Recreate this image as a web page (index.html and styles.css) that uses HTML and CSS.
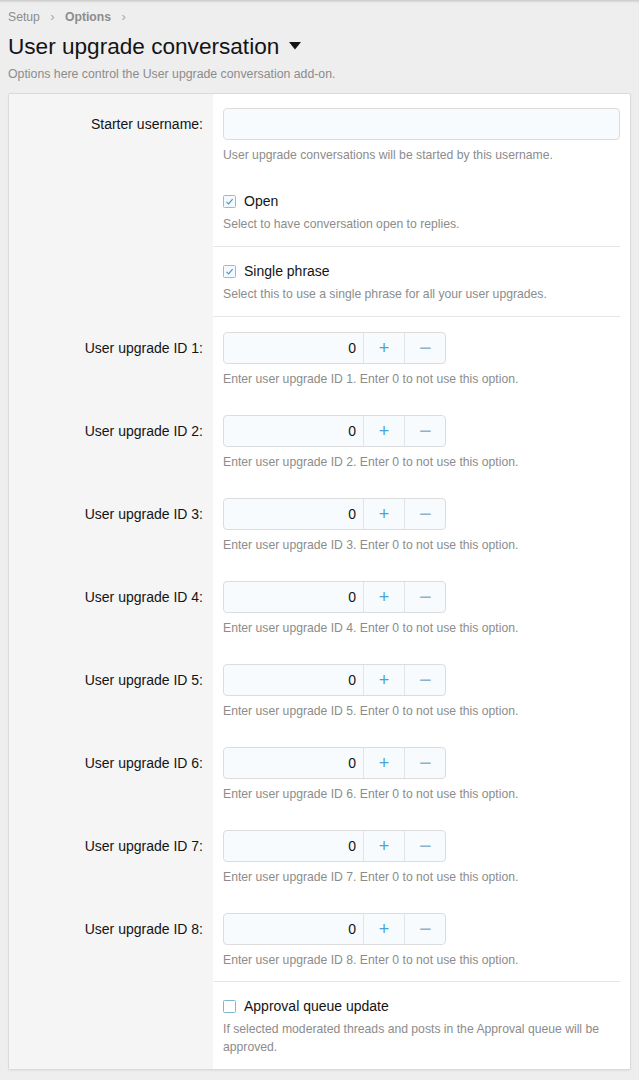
FILE: index.html
```html
<!DOCTYPE html>
<html lang="en">
<head>
    <meta charset="UTF-8">
    <meta name="viewport" content="width=device-width, initial-scale=1.0">
    <title>User upgrade conversation - Options</title>
    <link rel="stylesheet" href="styles.css">
</head>
<body>
    <div class="page">
        <div class="breadcrumb">
            <span>Setup</span>
            <span class="sep">&rsaquo;</span>
            <span class="crumb-bold">Options</span>
            <span class="sep">&rsaquo;</span>
        </div>

        <h1 class="page-title">User upgrade conversation
            <svg class="caret" width="12" height="8" viewBox="0 0 12 8"><path d="M0 0 H12 L6 7.5 Z" fill="#141414"/></svg>
        </h1>
        <p class="page-desc">Options here control the User upgrade conversation add-on.</p>

        <div class="panel">
            <div class="row">
                <div class="label">Starter username:</div>
                <div class="field">
                    <input class="text-input" type="text">
                    <div class="hint">User upgrade conversations will be started by this username.</div>
                </div>
            </div>

            <div class="row">
                <div class="label"></div>
                <div class="field sep-row check-field">
                    <label class="check">
                        <svg class="box" width="13" height="13" viewBox="0 0 13 13"><rect x="0.5" y="0.5" width="12" height="12" rx="1" fill="#f3f9fc" stroke="#8cbfd8"/><path d="M3.5 6.8 L5.6 8.9 L9.6 4.2" fill="none" stroke="#3f97c9" stroke-width="1.1"/></svg>
                        Open
                    </label>
                    <div class="hint">Select to have conversation open to replies.</div>
                </div>
            </div>

            <div class="row">
                <div class="label"></div>
                <div class="field sep-row check-field">
                    <label class="check">
                        <svg class="box" width="13" height="13" viewBox="0 0 13 13"><rect x="0.5" y="0.5" width="12" height="12" rx="1" fill="#f3f9fc" stroke="#8cbfd8"/><path d="M3.5 6.8 L5.6 8.9 L9.6 4.2" fill="none" stroke="#3f97c9" stroke-width="1.1"/></svg>
                        Single phrase
                    </label>
                    <div class="hint">Select this to use a single phrase for all your user upgrades.</div>
                </div>
            </div>

            <div class="row">
                <div class="label">User upgrade ID 1:</div>
                <div class="field num-field">
                    <div class="number-box"><input class="number-input" type="text" value="0"><span class="num-btn plus">+</span><span class="num-btn minus"><span class="glyph">&minus;</span></span></div>
                    <div class="hint">Enter user upgrade ID 1. Enter 0 to not use this option.</div>
                </div>
            </div>

            <div class="row">
                <div class="label">User upgrade ID 2:</div>
                <div class="field num-field">
                    <div class="number-box"><input class="number-input" type="text" value="0"><span class="num-btn plus">+</span><span class="num-btn minus"><span class="glyph">&minus;</span></span></div>
                    <div class="hint">Enter user upgrade ID 2. Enter 0 to not use this option.</div>
                </div>
            </div>

            <div class="row">
                <div class="label">User upgrade ID 3:</div>
                <div class="field num-field">
                    <div class="number-box"><input class="number-input" type="text" value="0"><span class="num-btn plus">+</span><span class="num-btn minus"><span class="glyph">&minus;</span></span></div>
                    <div class="hint">Enter user upgrade ID 3. Enter 0 to not use this option.</div>
                </div>
            </div>

            <div class="row">
                <div class="label">User upgrade ID 4:</div>
                <div class="field num-field">
                    <div class="number-box"><input class="number-input" type="text" value="0"><span class="num-btn plus">+</span><span class="num-btn minus"><span class="glyph">&minus;</span></span></div>
                    <div class="hint">Enter user upgrade ID 4. Enter 0 to not use this option.</div>
                </div>
            </div>

            <div class="row">
                <div class="label">User upgrade ID 5:</div>
                <div class="field num-field">
                    <div class="number-box"><input class="number-input" type="text" value="0"><span class="num-btn plus">+</span><span class="num-btn minus"><span class="glyph">&minus;</span></span></div>
                    <div class="hint">Enter user upgrade ID 5. Enter 0 to not use this option.</div>
                </div>
            </div>

            <div class="row">
                <div class="label">User upgrade ID 6:</div>
                <div class="field num-field">
                    <div class="number-box"><input class="number-input" type="text" value="0"><span class="num-btn plus">+</span><span class="num-btn minus"><span class="glyph">&minus;</span></span></div>
                    <div class="hint">Enter user upgrade ID 6. Enter 0 to not use this option.</div>
                </div>
            </div>

            <div class="row">
                <div class="label">User upgrade ID 7:</div>
                <div class="field num-field">
                    <div class="number-box"><input class="number-input" type="text" value="0"><span class="num-btn plus">+</span><span class="num-btn minus"><span class="glyph">&minus;</span></span></div>
                    <div class="hint">Enter user upgrade ID 7. Enter 0 to not use this option.</div>
                </div>
            </div>

            <div class="row">
                <div class="label">User upgrade ID 8:</div>
                <div class="field num-field sep-row">
                    <div class="number-box"><input class="number-input" type="text" value="0"><span class="num-btn plus">+</span><span class="num-btn minus"><span class="glyph">&minus;</span></span></div>
                    <div class="hint">Enter user upgrade ID 8. Enter 0 to not use this option.</div>
                </div>
            </div>

            <div class="row">
                <div class="label"></div>
                <div class="field check-field">
                    <label class="check">
                        <svg class="box" width="13" height="13" viewBox="0 0 13 13"><rect x="0.5" y="0.5" width="12" height="12" rx="1" fill="#ffffff" stroke="#7fb6d2"/></svg>
                        Approval queue update
                    </label>
                    <div class="hint">If selected moderated threads and posts in the Approval queue will be approved.</div>
                </div>
            </div>
        </div>
    </div>
</body>
</html>
```

FILE: styles.css
```css
body {
    margin: 0;
    background-color: #eeeeee;
    font-family: "Liberation Sans", Arial, sans-serif;
    color: #141414;
    box-shadow: inset 0 3px 3px -2px rgba(0, 0, 0, 0.2);
    min-height: 1080px;
}
.page {
    padding: 8px 8px 0 8px;
}
.breadcrumb {
    font-size: 12.2px;
    line-height: 18px;
    color: #8c8c8c;
}
.breadcrumb .sep {
    color: #a8a8a8;
    margin: 0 7px;
    font-size: 13px;
}
.crumb-bold {
    font-weight: bold;
}
.page-title {
    margin: 7px 0 0 0;
    font-size: 22.6px;
    font-weight: normal;
    line-height: 27px;
}
.caret {
    margin-left: 3px;
    vertical-align: 4px;
}
.page-desc {
    margin: 5px 0 0 0;
    font-size: 12.3px;
    line-height: 18px;
    color: #8c8c8c;
}
.panel {
    margin-top: 10px;
    background-color: #fff;
    border: 1px solid #dadada;
    border-radius: 2px;
    box-shadow: 0 1px 2px rgba(0, 0, 0, 0.06);
}
.row {
    display: flex;
}
.label {
    width: 194px;
    flex-shrink: 0;
    background-color: #f5f5f5;
    text-align: right;
    padding: 20px 10px 0 0;
    font-size: 14px;
    line-height: 20px;
}
.field {
    flex: 1;
    padding: 14px 0 13px 10px;
    margin-right: 10px;
}
.num-field {
    padding-top: 15px;
    padding-bottom: 12px;
}
.row:has(.num-field) .label {
    padding-top: 21px;
}
.sep-row {
    border-bottom: 1px solid #e6e6e6;
}
.hint {
    margin-top: 6px;
    font-size: 12.2px;
    line-height: 18px;
    color: #8c8c8c;
}
.check-field .hint {
    margin-top: 4px;
}
.text-input {
    display: block;
    box-sizing: border-box;
    width: 100%;
    height: 32px;
    border: 1px solid #dcdcdc;
    border-radius: 4px;
    background-color: #f8fbfd;
    font: inherit;
}
.check {
    display: flex;
    align-items: center;
    gap: 8px;
    font-size: 14px;
    line-height: 20px;
    color: #141414;
}
.number-box {
    display: flex;
    width: 223px;
    height: 32px;
    box-sizing: border-box;
    border: 1px solid #dcdcdc;
    border-radius: 4px;
    background-color: #f8fbfd;
    overflow: hidden;
}
.number-input {
    width: 139px;
    box-sizing: border-box;
    border: none;
    background: transparent;
    text-align: right;
    padding: 0 7px 0 0;
    font-family: "Liberation Sans", Arial, sans-serif;
    font-size: 14px;
    color: #141414;
}
.num-btn {
    flex: 1;
    display: flex;
    align-items: center;
    justify-content: center;
    border-left: 1px solid #e4e4e4;
    font-size: 18px;
}
.plus {
    color: #4aa3d8;
}
.minus {
    color: #8db3cc;
}
.minus .glyph {
    display: inline-block;
    transform: scaleX(1.2);
}
```
